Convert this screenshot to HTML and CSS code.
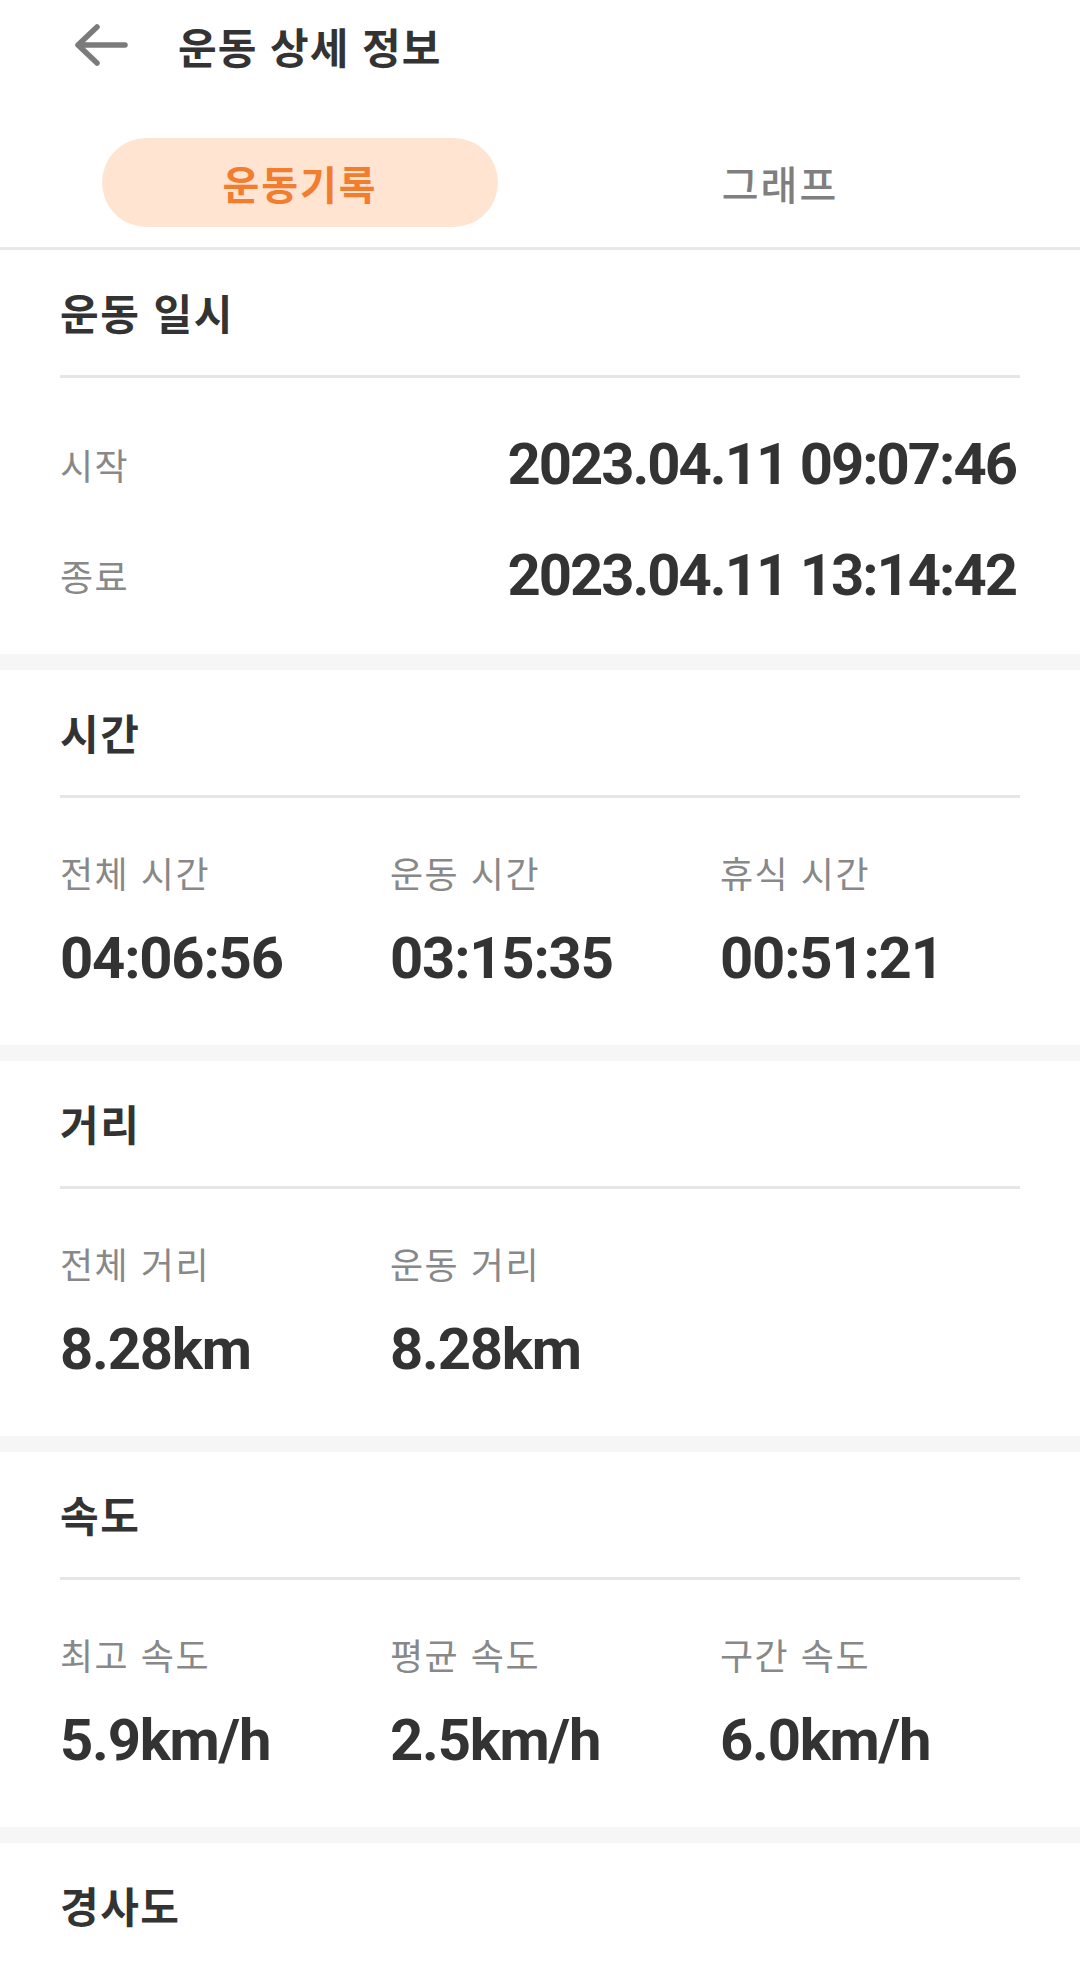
FILE: index.html
```html
<!DOCTYPE html>
<html lang="ko">
<head>
<meta charset="utf-8">
<title>운동 상세 정보</title>
<link rel="stylesheet" href="styles.css">
</head>
<body>
<div class="screen">
  <div class="top">
    <header class="appbar">
      <svg class="back" viewBox="0 0 60 48" width="60" height="48" aria-hidden="true">
        <path d="M6 24 H53 M25 6 L6 24 L25 42" fill="none" stroke="#7b7b7b" stroke-width="5.5" stroke-linecap="round" stroke-linejoin="round"/>
      </svg>
      <h1 class="appbar-title">운동 상세 정보</h1>
    </header>
    <nav class="tabs">
      <div class="tab"><span class="tab-pill tab-active">운동기록</span></div>
      <div class="tab"><span class="tab-pill">그래프</span></div>
    </nav>
  </div>

  <div class="cards">
    <section class="card">
      <h2 class="card-title">운동 일시</h2>
      <div class="rows">
        <div class="row"><span class="label">시작</span><span class="value">2023.04.11 09:07:46</span></div>
        <div class="row"><span class="label">종료</span><span class="value">2023.04.11 13:14:42</span></div>
      </div>
    </section>

    <section class="card">
      <h2 class="card-title">시간</h2>
      <div class="stats">
        <div class="stat"><div class="label">전체 시간</div><div class="value">04:06:56</div></div>
        <div class="stat"><div class="label">운동 시간</div><div class="value">03:15:35</div></div>
        <div class="stat"><div class="label">휴식 시간</div><div class="value">00:51:21</div></div>
      </div>
    </section>

    <section class="card">
      <h2 class="card-title">거리</h2>
      <div class="stats">
        <div class="stat"><div class="label">전체 거리</div><div class="value">8.28km</div></div>
        <div class="stat"><div class="label">운동 거리</div><div class="value">8.28km</div></div>
      </div>
    </section>

    <section class="card">
      <h2 class="card-title">속도</h2>
      <div class="stats">
        <div class="stat"><div class="label">최고 속도</div><div class="value">5.9km/h</div></div>
        <div class="stat"><div class="label">평균 속도</div><div class="value">2.5km/h</div></div>
        <div class="stat"><div class="label">구간 속도</div><div class="value">6.0km/h</div></div>
      </div>
    </section>

    <section class="card">
      <h2 class="card-title">경사도</h2>
    </section>
  </div>
</div>
</body>
</html>
```

FILE: styles.css
```css
html, body {
  margin: 0;
  padding: 0;
  background: #ffffff;
}

body {
  font-family: "Noto Sans CJK KR", "Noto Sans", sans-serif;
  color: #333333;
}

.screen {
  width: 1080px;
  height: 1962px;
  overflow: hidden;
  background: #f6f6f6;
}

.top {
  background: #ffffff;
  border-bottom: 3px solid #e8e8e8;
}

.appbar {
  height: 92px;
  display: flex;
  align-items: center;
  padding-left: 72px;
}

.back {
  display: block;
  flex: none;
  margin-top: -2px;
}

.appbar-title {
  margin: 0 0 0 46px;
  font-size: 42px;
  font-weight: 700;
  line-height: 60px;
  letter-spacing: 1px;
  color: #333333;
}

.tabs {
  display: grid;
  grid-template-columns: 480px 480px;
  padding: 46px 60px 20px;
}

.tab {
  display: flex;
  justify-content: center;
}

.tab-pill {
  width: 396px;
  height: 89px;
  border-radius: 45px;
  display: flex;
  align-items: center;
  justify-content: center;
  font-size: 40px;
  font-weight: 500;
  letter-spacing: 2px;
  color: #7f7f7f;
}

.tab-active {
  background: #ffe4d1;
  color: #f37d2e;
  font-weight: 700;
}

.cards {
  display: flex;
  flex-direction: column;
  gap: 16px;
}

.card {
  background: #ffffff;
  padding: 0 60px;
}

.card-title {
  margin: 0;
  padding: 32px 0 33px;
  line-height: 60px;
  font-size: 42px;
  font-weight: 700;
  letter-spacing: 1.5px;
  color: #333333;
  border-bottom: 3px solid #e6e6e6;
}

.label {
  font-size: 36px;
  line-height: 48px;
  letter-spacing: 1.5px;
  color: #888888;
}

.value {
  font-family: "Roboto", "Liberation Sans", sans-serif;
  font-weight: 700;
  font-size: 58px;
  line-height: 60px;
  letter-spacing: -2px;
  color: #333333;
}

.rows {
  padding: 30px 0 24px;
}

.row {
  height: 111px;
  display: flex;
  align-items: center;
  justify-content: space-between;
}

.row .value {
  padding-right: 4px;
}

.stats {
  display: grid;
  grid-template-columns: repeat(3, 330px);
  padding: 50px 0 57px;
}

.stat .value {
  margin-top: 32px;
  letter-spacing: -1.2px;
}
```
